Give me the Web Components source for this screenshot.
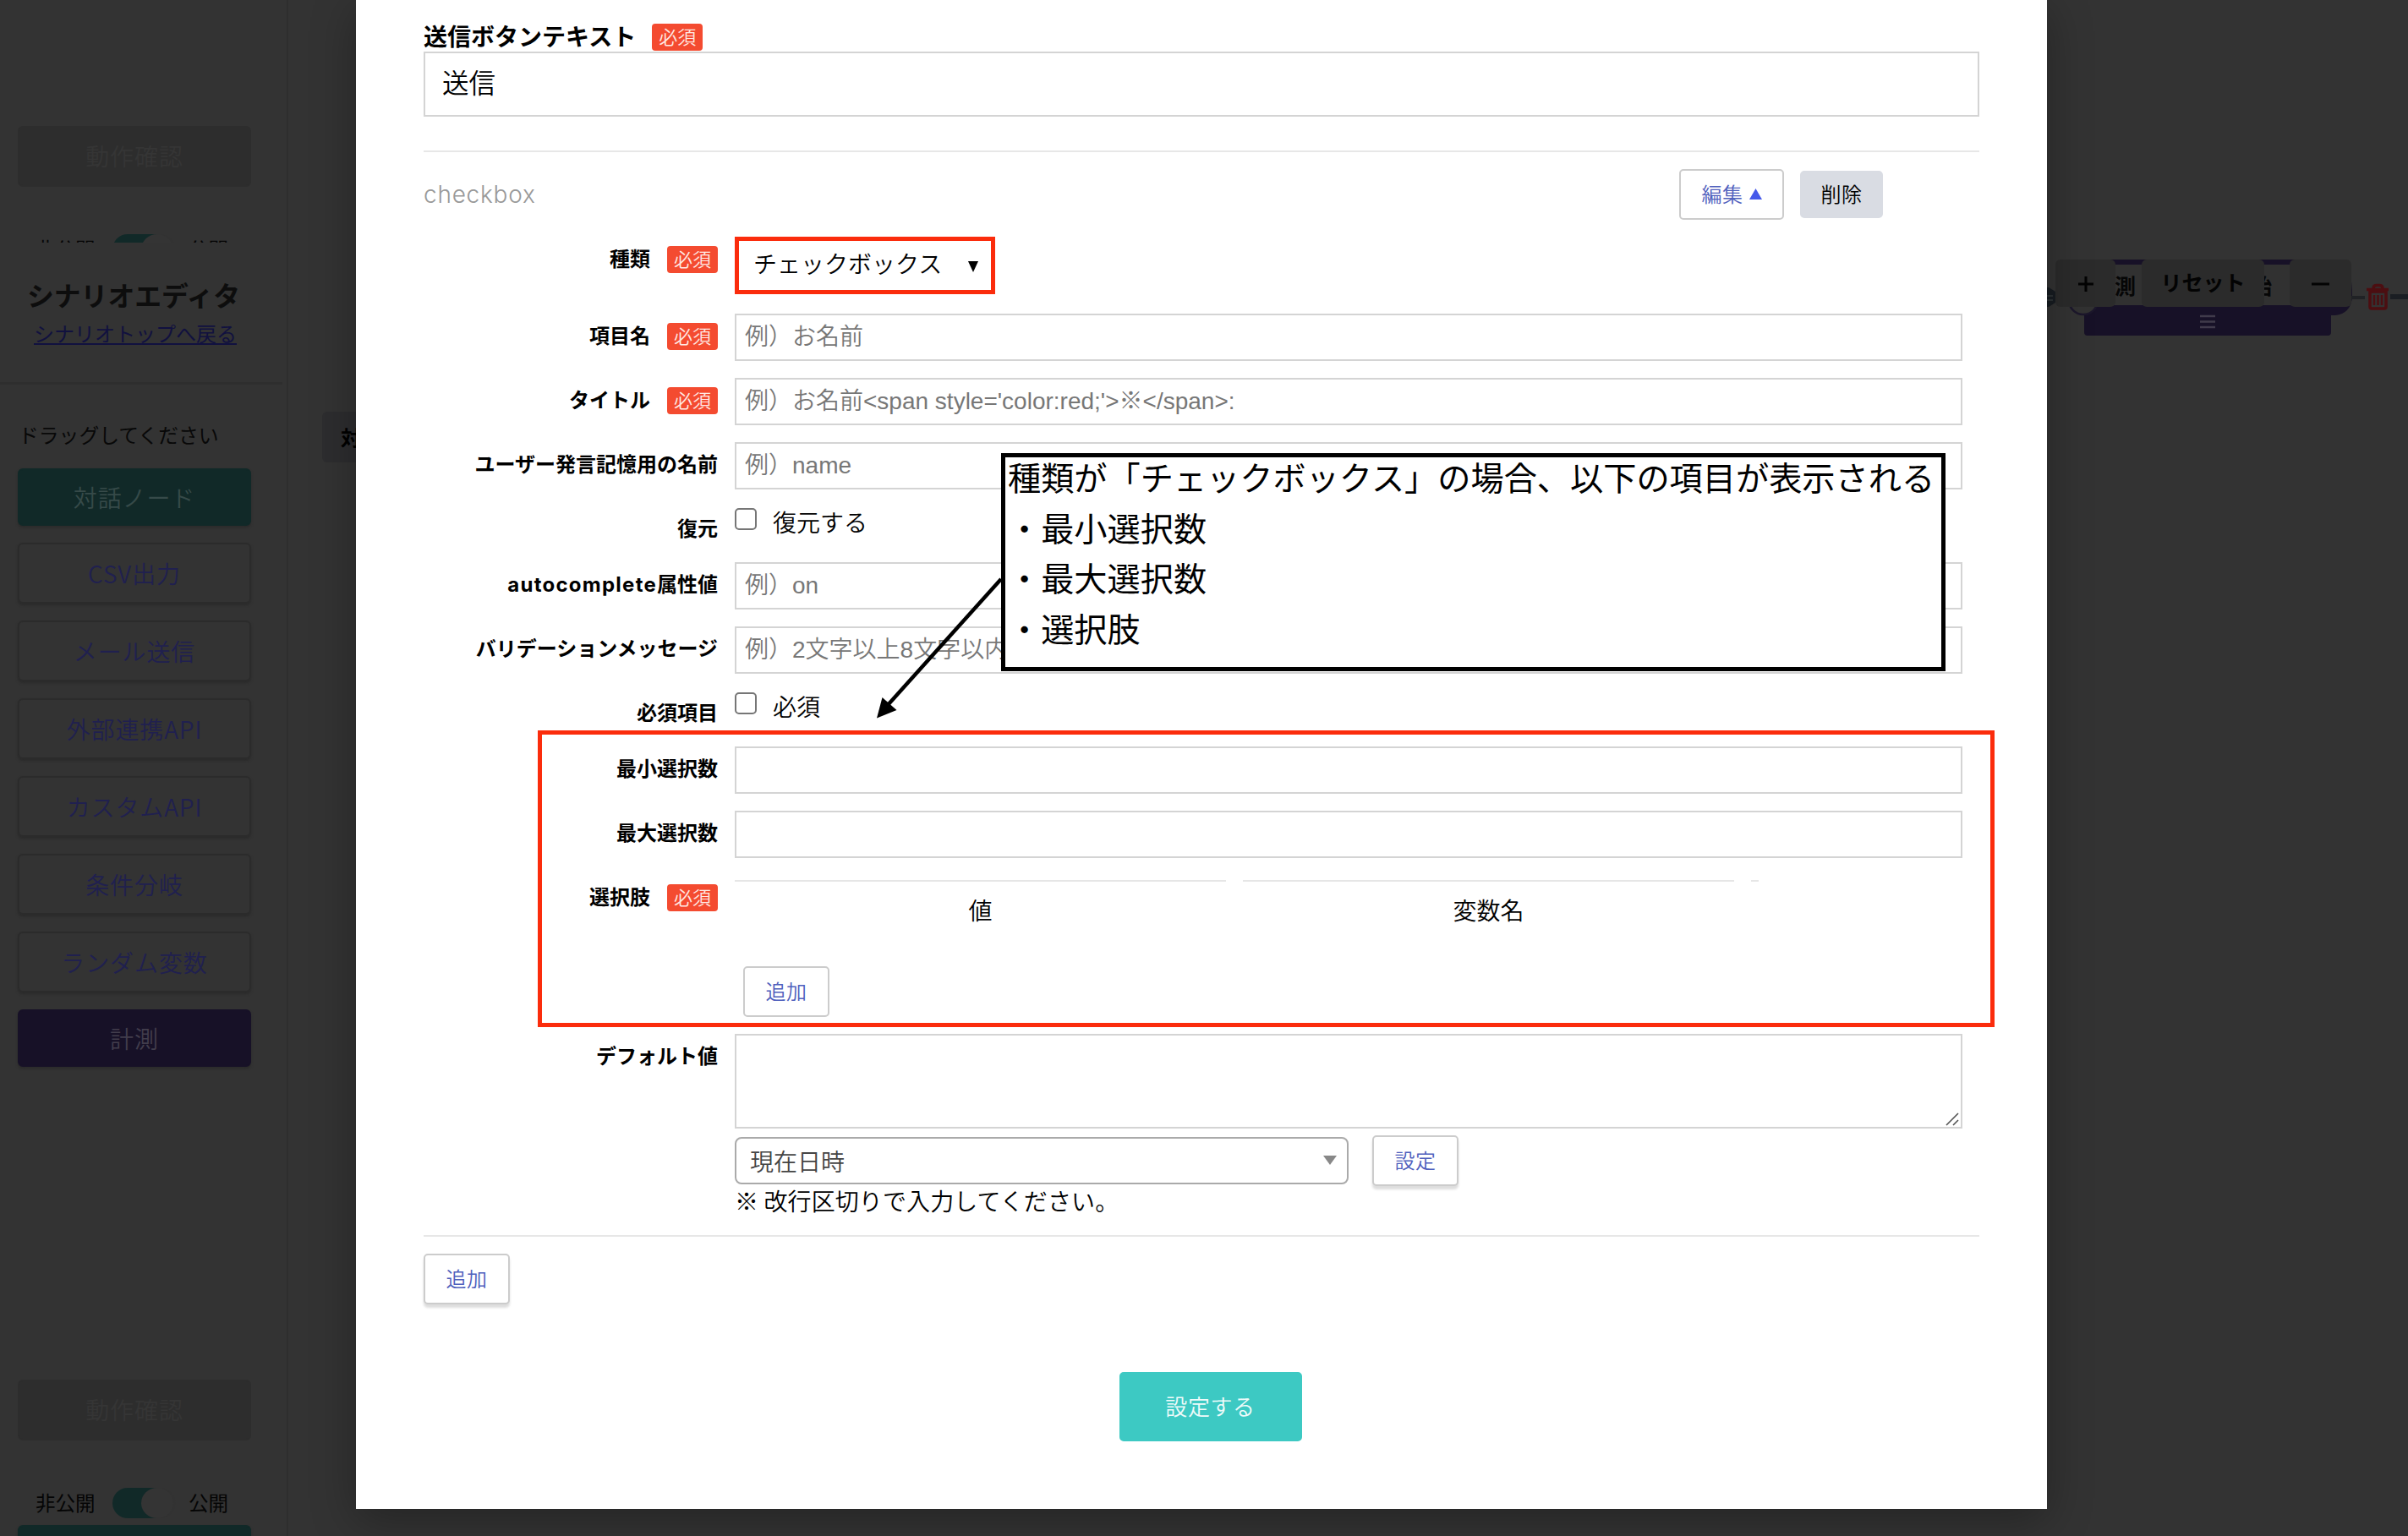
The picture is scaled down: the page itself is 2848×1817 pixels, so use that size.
<!DOCTYPE html>
<html lang="ja">
<head>
<meta charset="utf-8">
<title>シナリオエディタ</title>
<style>
html,body{margin:0;height:100%}
body{background:#333;font-family:"Noto Sans CJK JP","Liberation Sans",sans-serif;font-size:28px;line-height:1;color:#000;overflow:hidden}
</style>
</head>
<body>
<scenario-editor></scenario-editor>
<script>
const define = (name, html) => {
  const t = document.createElement('template');
  t.innerHTML = html;
  customElements.define(name, class extends HTMLElement {
    constructor() {
      super();
      this.attachShadow({ mode: 'open' }).appendChild(t.content.cloneNode(true));
    }
  });
};

define('required-badge', `<style>
:host{display:flex;align-items:center;justify-content:center;width:60px;height:32px;border-radius:4px;background:#f44b30;color:#ffe9e4;font-size:22px;font-weight:350;line-height:30px}
span{margin-top:-4px}
</style><span>必須</span>`);

define('side-button', `<style>
:host{box-sizing:border-box;display:flex;align-items:center;justify-content:center;height:72px;border:2px solid #2b2b2b;border-radius:6px;color:#20204f;font-size:28px;font-weight:350;letter-spacing:.9px;box-shadow:0 2px 3px #2a2a2a}
:host([kind=teal]){background:#112928;border-color:#112928;color:#364a49;height:68px}
:host([kind=purple]){background:#171127;border-color:#171127;color:#423d4c;height:68px}
:host([kind=off]){background:#2d2d2d;border-color:#2d2d2d;color:#353535;box-shadow:none;padding-bottom:3px}
</style><slot></slot>`);

define('publish-toggle', `<style>
:host{display:flex;align-items:center;height:36px;padding-left:42px;font-size:23.5px;color:#050505;flex:none;white-space:nowrap}
i{display:block;width:41px;height:36px;margin:0 0 0 20px;padding-left:34px;border-radius:18px;background:linear-gradient(90deg,#112928 54px,#323232 54px);flex:none}
i b{display:block;width:38px;height:36px;border-radius:50%;background:#343434}
span{width:71px;flex:none}span+i+span{margin-left:15px}
</style><span>非公開</span><i><b></b></i><span>公開</span>`);

define('app-sidebar', `<style>
:host{box-sizing:border-box;display:flex;flex-direction:column;width:341px;height:1817px;border-right:2px solid #2e2e2e;overflow:hidden}
side-button{margin:0 42px 20px 21px;flex:none}
.a{margin-top:149px;margin-bottom:56px}
.clip{height:10px;overflow:hidden;flex:none}
h1{margin:43px 0 0;padding-left:32px;font-size:31.8px;line-height:36px;font-weight:700;color:#0d0d0d}
a{margin:12px 0 0 40px;font-size:24px;line-height:32px;color:#11113f;text-decoration:underline;text-underline-offset:2px;text-decoration-thickness:2px}
hr{width:334px;height:3px;margin:42px 0 0;border:0;background:#2e2e2e;flex:none}
p{margin:43px 0 24px 22px;font-size:23.8px;line-height:32px;color:#080808}
.b{margin-top:350px;margin-bottom:56px}
.c{margin-top:8px}
</style>
<side-button class="a" kind="off">動作確認</side-button>
<div class="clip"><publish-toggle></publish-toggle></div>
<h1>シナリオエディタ</h1>
<a>シナリオトップへ戻る</a>
<hr>
<p>ドラッグしてください</p>
<side-button kind="teal">対話ノード</side-button>
<side-button>CSV出力</side-button>
<side-button>メール送信</side-button>
<side-button>外部連携API</side-button>
<side-button>カスタムAPI</side-button>
<side-button>条件分岐</side-button>
<side-button>ランダム変数</side-button>
<side-button kind="purple">計測</side-button>
<side-button class="b" kind="off">動作確認</side-button>
<publish-toggle></publish-toggle>
<side-button class="c" kind="teal"></side-button>`);

define('flow-canvas', `<style>
:host{position:relative;display:block;flex:1;height:1817px;overflow:hidden;font-weight:600}
div,svg{position:absolute}
.btn{box-sizing:border-box;display:flex;align-items:center;justify-content:center;height:56px;top:307px;background:#2b2b2b;border-radius:6px;color:#030303;font-size:25px;padding-bottom:3px}
.tab{left:40px;top:487px;width:120px;height:60px;background:#2d2d2f;border-radius:6px;display:flex;align-items:center;padding-left:22px;font-size:24px}
.txt{font-size:25px;line-height:36px;top:319px;white-space:nowrap;color:#060606}
</style>
<div class="tab">対話ノード</div>
<svg style="left:2059px;top:280px" width="448" height="140" viewBox="0 0 448 140">
<path d="M13 60l10-0l8 5v13l-8 5h-10z" fill="#171c21"/><path d="M20 70h8M21 75h7" stroke="#2c3234" stroke-width="2"/>
<path d="M50 27h320q12 8 12 45q-2 19-20 21H65q-20-4-20-20z" fill="#171127"/>
<path d="M65 80h292v33q0 4-4 4H69q-4 0-4-4z" fill="#171127"/>
<path d="M95 33h225v48H95z" fill="#313131"/>
<circle cx="64" cy="75" r="17" fill="#323232" stroke="#1c172b" stroke-width="2.5"/>
<path d="M202 94h18M202 100.500h18M202 107h18" stroke="#403b4b" stroke-width="2.500"/>
<path d="M381 72h16" stroke="#202225" stroke-width="4"/><path d="M427 71h21" stroke="#1b1e23" stroke-width="6"/>
<g fill="none" stroke="#4c0e11" stroke-width="3.500"><path d="M399 62.500h26M407 61q0-3.500 4-3.500h3q4 0 4 3.500M403 65v18q0 2 2 2h15q2 0 2-2V65z"/><path d="M408 69v12M412.500 69v12M417 69v12" stroke-width="2.500"/></g>
</svg>
<div class="txt" style="left:2135px">計測</div>
<div class="txt" style="left:2296px">開始</div>
<div class="btn" style="left:2090px;width:71px"><svg width="18" height="18" style="left:27px;top:20px"><path d="M9 0v18M0 9h18" stroke="#030303" stroke-width="3"/></svg></div>
<div class="btn" style="left:2192px;width:145px">リセット</div>
<div class="btn" style="left:2367px;width:73px"><svg width="21" height="4" style="left:26px;top:27px"><path d="M0 2h21" stroke="#030303" stroke-width="3"/></svg></div>`);

define('push-button', `<style>
:host{box-sizing:border-box;display:flex;align-items:center;justify-content:center;gap:7px;width:102px;height:60px;border:2px solid #ccc;border-radius:5px;background:#fff;color:#4f60bd;font-size:24px;font-weight:350;letter-spacing:.6px;padding-bottom:2px;flex:none}
:host([raised]){box-shadow:0 4px 3px #ddd}
:host([kind=edit]){width:124px}
:host([kind=gray]){width:98px;height:56px;background:#d9dce3;border-color:#d9dce3;color:#000}
:host([kind=main]){width:216px;height:82px;background:#3dc9c3;border-color:#3dc9c3;color:#eefbfa;font-size:26px}
</style><slot></slot>`);

define('text-box', `<style>
:host{box-sizing:border-box;display:flex;align-items:center;height:56px;border:2px solid #d4d4d4;background:#fff;padding-left:10px;color:#777;font-family:"Liberation Sans","Noto Sans CJK JP",sans-serif;font-weight:350;white-space:pre;flex:none}
:host([large]){height:77px;padding-left:20px;font-size:31.5px;color:#000}
:host([area]){height:112px;align-items:flex-end;justify-content:flex-end;padding:0}
</style><slot></slot>`);

define('check-item', `<style>
:host{display:flex;height:40px;align-items:center;gap:19px;font-weight:350}
i{box-sizing:border-box;width:26px;height:26px;margin-top:-10px;border:2px solid #767676;border-radius:5px;background:#fff}
span{margin-top:-4px}
</style><i></i><span><slot></slot></span>`);

define('form-row', `<style>
:host{display:grid;grid-template-columns:348px 1452px;column-gap:20px;height:56px;align-items:start;flex:none}
:host([check]){height:46px}
:host([kind=type]){height:71px}
:host([kind=table]){height:168px}
:host([kind=default]){height:218px}
.l{display:flex;justify-content:flex-end;align-items:center;gap:20px;height:53px;font-family:Inter,"Noto Sans CJK JP",sans-serif;font-size:24px;font-weight:700;white-space:nowrap}
.l slot{display:block}
required-badge{display:none;font-family:"Noto Sans CJK JP",sans-serif}
:host([required]) required-badge{display:flex}
</style><div class="l"><slot name="label"></slot><required-badge></required-badge></div><div><slot></slot></div>`);

define('choice-table', `<style>
:host{display:flex;flex-direction:column;padding-top:6px;gap:30px}
.h{display:grid;grid-template-columns:581px 581px 9px;column-gap:20px}
.h span{height:70px;line-height:66px;border-top:2px solid #e6e6e6;text-align:center;font-weight:350}
push-button{margin-left:10px}
</style><div class="h"><span>値</span><span>変数名</span><span></span></div><push-button>追加</push-button>`);

define('select-box', `<style>
:host{box-sizing:border-box;display:flex;align-items:center;justify-content:space-between;width:726px;height:56px;border:2px solid #aaa;border-radius:8px;padding:0 12px 0 16px;color:#444;font-weight:350}
</style><slot></slot><svg width="16" height="12"><path d="M0 0h16l-8 11z" fill="#888"/></svg>`);

define('settings-modal', `<style>
:host{box-sizing:border-box;display:flex;flex-direction:column;gap:20px;position:absolute;left:421px;top:0;width:2000px;height:1785px;padding:28px 80px 80px;background:#fff;box-shadow:0 12px 50px rgba(0,0,0,.3)}
.top{display:flex;flex-direction:column;gap:1px;margin-bottom:20px}
.cap{display:flex;gap:19px;height:32px;align-items:center;font-weight:700}
.cap span{margin-top:-5px}
hr{margin:0;border:0;height:2px;background:#e7e7e7;flex:none}
.head{display:flex;align-items:center;height:60px;margin-right:114px;gap:19px}
.head b{flex:1;font:300 28px Inter,sans-serif;color:#999;letter-spacing:.75px}
.type{display:flex;align-items:center;justify-content:space-between;width:266px;height:62px;padding-left:22px;font-weight:350}
.line{display:flex;align-items:center;gap:28px;height:60px;margin-top:8px}
.note{height:38px;line-height:35px;font-weight:350;letter-spacing:.1px}
.add{margin-bottom:60px}
.main{align-self:center;margin-right:-21px}
.lat{letter-spacing:1.250px}
</style>
<section class="top"><div class="cap"><span>送信ボタンテキスト</span><required-badge></required-badge></div><text-box large>送信</text-box></section>
<hr>
<div class="head"><b>checkbox</b><push-button kind="edit"><span>編集</span><svg width="15" height="13"><path d="M0 13L7.500 0L15 13z" fill="#4559ea"/></svg></push-button><push-button kind="gray">削除</push-button></div>
<form-row kind="type" required><span slot="label">種類</span><div class="type">チェックボックス<svg width="12" height="13" style="margin-top:8px"><path d="M0 0h12l-6 13z"/></svg></div></form-row>
<form-row required><span slot="label">項目名</span><text-box>例）お名前</text-box></form-row>
<form-row required><span slot="label">タイトル</span><text-box>例）お名前&lt;span style='color:red;'&gt;※&lt;/span&gt;:</text-box></form-row>
<form-row><span slot="label">ユーザー発言記憶用の名前</span><text-box>例）name</text-box></form-row>
<form-row check><span slot="label">復元</span><check-item>復元する</check-item></form-row>
<form-row><span slot="label"><span class="lat">autocomplete</span>属性値</span><text-box>例）on</text-box></form-row>
<form-row><span slot="label">バリデーションメッセージ</span><text-box>例）2文字以上8文字以内</text-box></form-row>
<form-row check><span slot="label">必須項目</span><check-item>必須</check-item></form-row>
<form-row><span slot="label">最小選択数</span><text-box></text-box></form-row>
<form-row><span slot="label">最大選択数</span><text-box></text-box></form-row>
<form-row kind="table" required><span slot="label">選択肢</span><choice-table></choice-table></form-row>
<form-row kind="default"><span slot="label">デフォルト値</span>
<text-box area><svg width="18" height="18"><path d="M1 16L15 2M9 16L15 10" stroke="#555" stroke-width="1.600"/></svg></text-box>
<div class="line"><select-box>現在日時</select-box><push-button raised>設定</push-button></div>
<div class="note">※ 改行区切りで入力してください。</div></form-row>
<hr>
<push-button class="add" raised>追加</push-button>
<push-button class="main" kind="main">設定する</push-button>`);

define('annotation-layer', `<style>
:host{position:absolute;left:0;top:0;width:2848px;height:1817px;pointer-events:none}
div,svg{position:absolute;box-sizing:border-box}
.red{border:5px solid #fb2c0c}
.note{left:1184px;top:536px;width:1117px;height:258px;border:5px solid #000;background:#fff;padding:0 0 0 3px;font-size:39.200px;line-height:59.700px;white-space:pre}
.note span{display:block;margin-top:-7px}
</style>
<div class="red" style="left:869px;top:280px;width:308px;height:68px"></div>
<div class="red" style="left:636px;top:864px;width:1723px;height:351px"></div>
<svg width="2848" height="1817" style="left:0;top:0"><path d="M1184 685L1050 834" stroke="#000" stroke-width="4.500"/><path d="M1037 849.500L1043.500 825L1060.500 840z"/></svg>
<div class="note"><span>種類が「チェックボックス」の場合、以下の項目が表示される
・最小選択数
・最大選択数
・選択肢</span></div>`);

define('scenario-editor', `<style>
:host{position:relative;display:flex;width:2848px;height:1817px;overflow:hidden}
</style><app-sidebar></app-sidebar><flow-canvas></flow-canvas><settings-modal></settings-modal><annotation-layer></annotation-layer>`);
</script>
</body>
</html>
